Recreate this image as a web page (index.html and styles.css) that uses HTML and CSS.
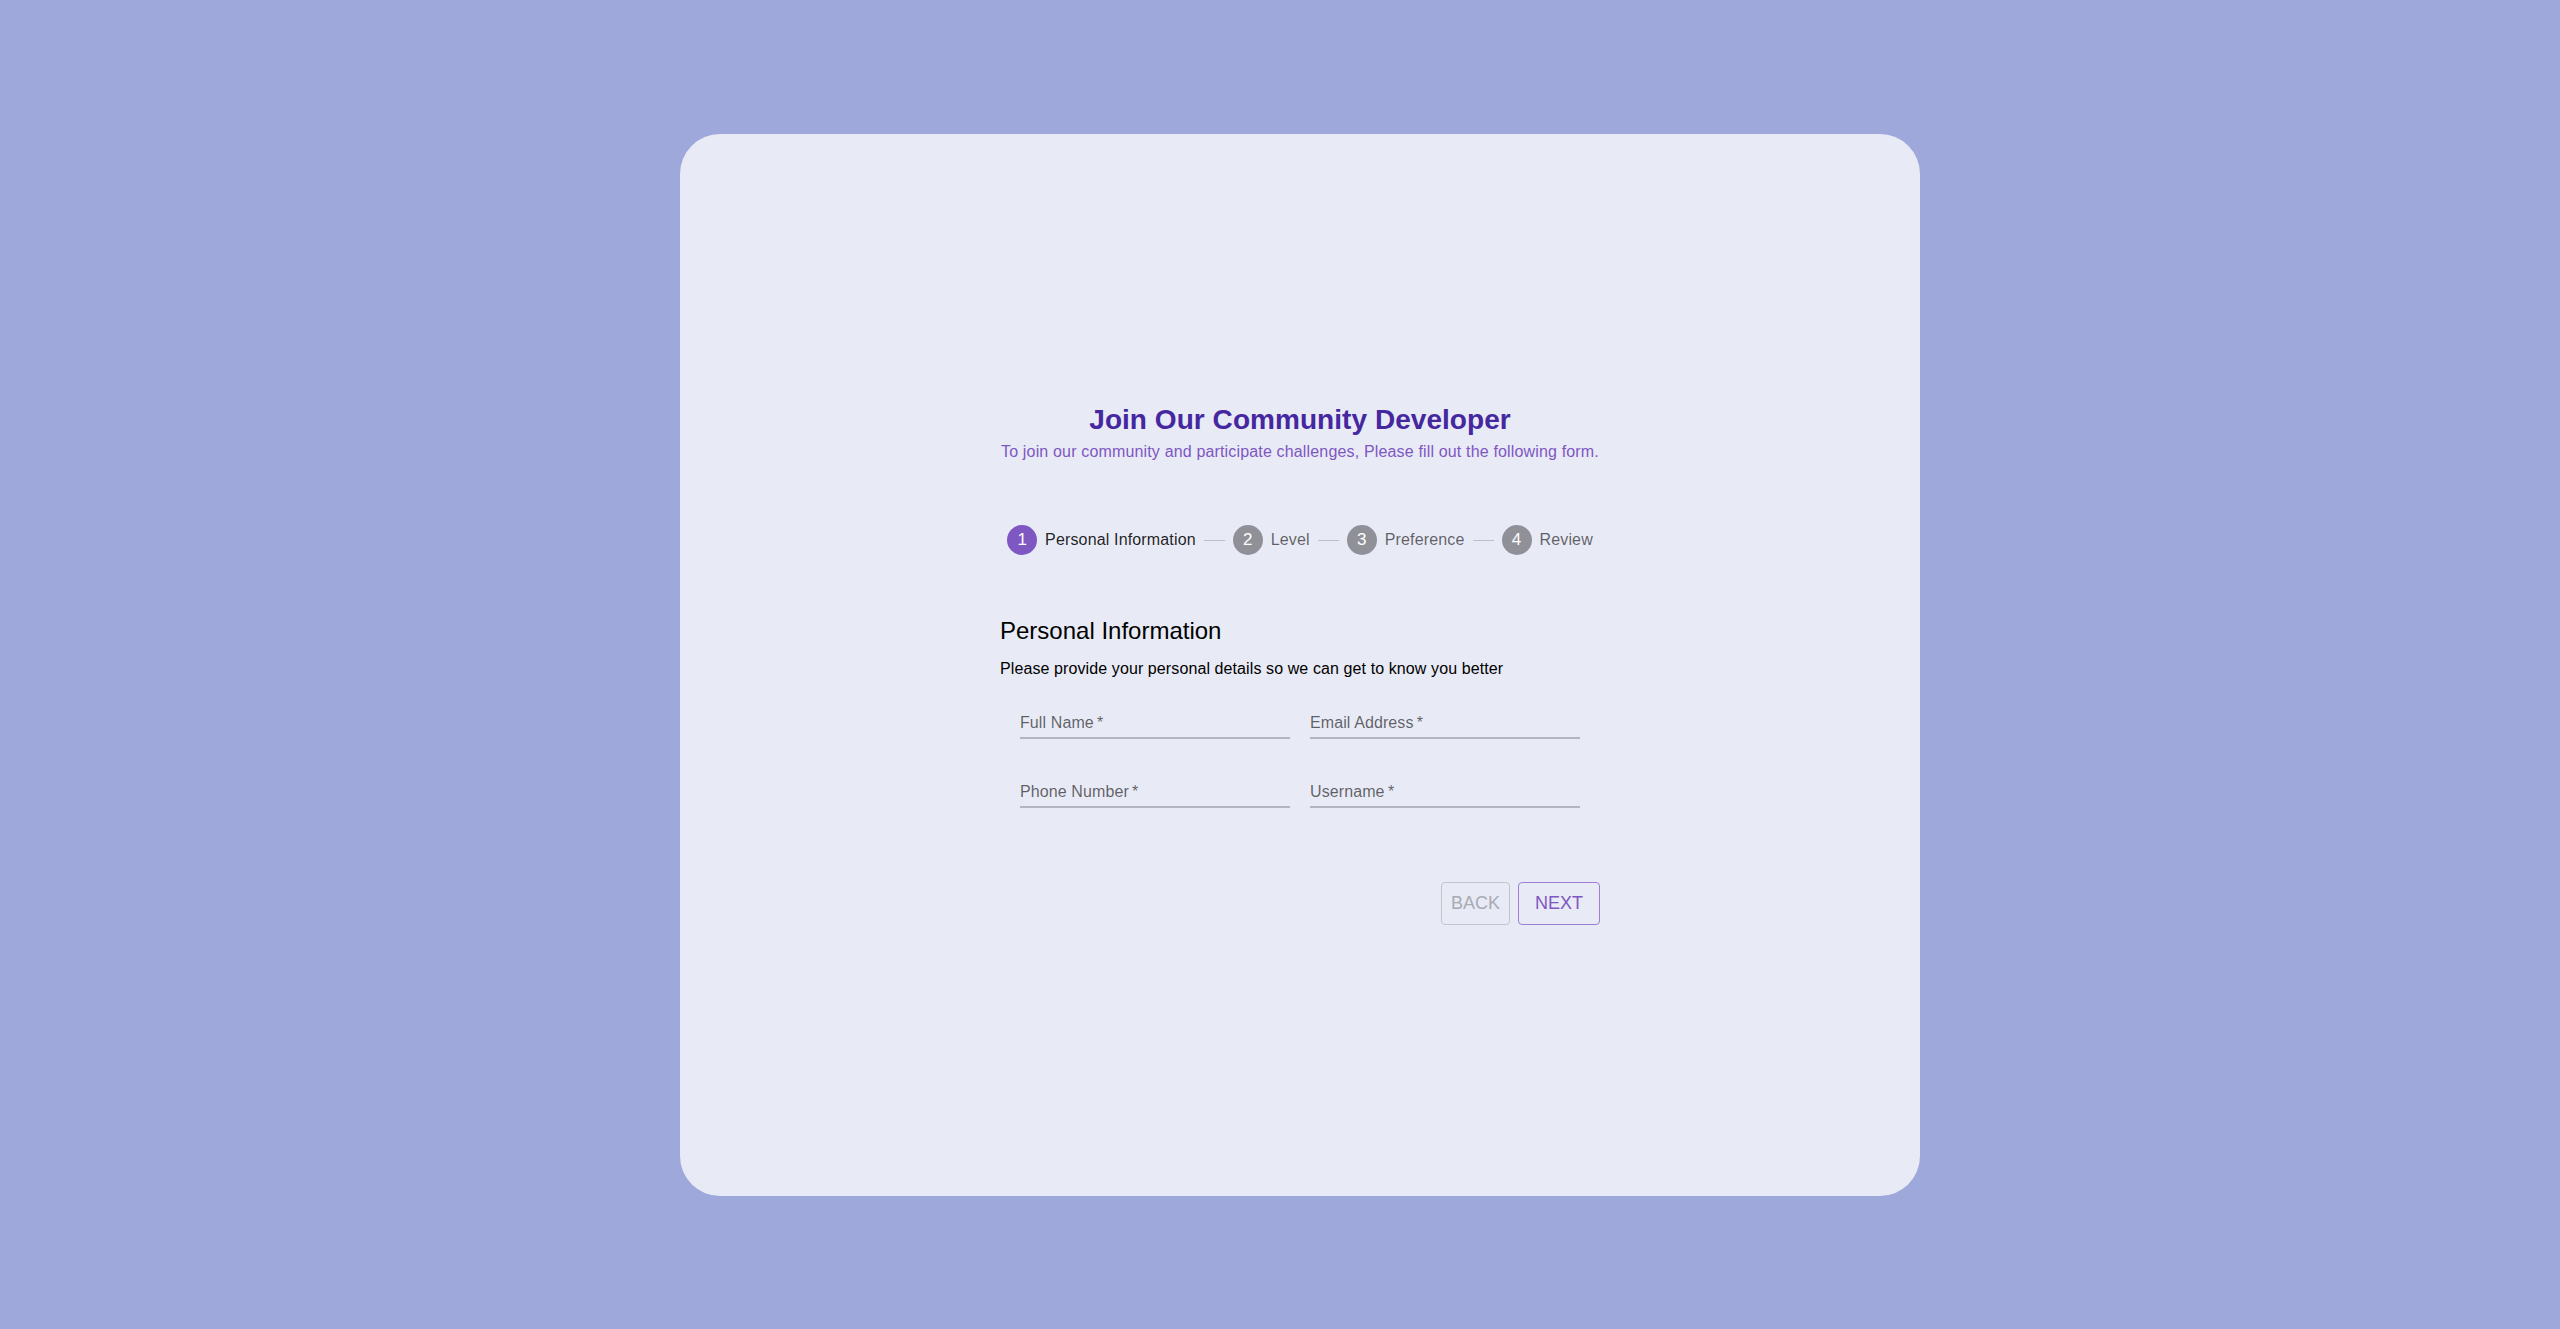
FILE: index.html
```html
<!DOCTYPE html>
<html lang="en">
<head>
<meta charset="utf-8">
<title>Join Our Community Developer</title>
<link rel="stylesheet" href="styles.css">
</head>
<body>
<div class="page">
  <div class="card">
    <div class="content">
      <h1 class="title">Join Our Community Developer</h1>
      <p class="subtitle">To join our community and participate challenges, Please fill out the following form.</p>

      <div class="stepper">
        <div class="step active"><span class="step-icon">1</span><span class="step-label">Personal Information</span></div>
        <span class="connector"></span>
        <div class="step"><span class="step-icon">2</span><span class="step-label">Level</span></div>
        <span class="connector"></span>
        <div class="step"><span class="step-icon">3</span><span class="step-label">Preference</span></div>
        <span class="connector"></span>
        <div class="step"><span class="step-icon">4</span><span class="step-label">Review</span></div>
      </div>

      <div class="form">
        <h2 class="section-title">Personal Information</h2>
        <p class="section-desc">Please provide your personal details so we can get to know you better</p>
        <div class="fields">
          <div class="field"><span class="field-label">Full Name&thinsp;*</span></div>
          <div class="field"><span class="field-label">Email Address&thinsp;*</span></div>
          <div class="field"><span class="field-label">Phone Number&thinsp;*</span></div>
          <div class="field"><span class="field-label">Username&thinsp;*</span></div>
        </div>
        <div class="actions">
          <button class="btn btn-back" disabled>BACK</button>
          <button class="btn btn-next">NEXT</button>
        </div>
      </div>
    </div>
  </div>
</div>
</body>
</html>
```

FILE: styles.css
```css
* { box-sizing: border-box; }

html, body {
  margin: 0;
  padding: 0;
  background: #9fa8da;
  font-family: "Liberation Sans", Arial, Helvetica, sans-serif;
}

.page {
  height: 1329px;
  display: flex;
  align-items: center;
  justify-content: center;
  padding-left: 40px;
}

.card {
  width: 1240px;
  height: 1062px;
  background: #e8eaf6;
  border-radius: 40px;
  display: flex;
  align-items: center;
  justify-content: center;
}

.content {
  width: 600px;
  display: flex;
  flex-direction: column;
}

.title {
  margin: 0;
  font-size: 28px;
  line-height: 32px;
  font-weight: 700;
  color: #4527a0;
  text-align: center;
  letter-spacing: 0.05px;
}

.subtitle {
  margin: 6px 0 0;
  font-size: 16px;
  line-height: 20px;
  color: #7e57c2;
  text-align: center;
  letter-spacing: 0.16px;
}

.stepper {
  margin-top: 63px;
  height: 30px;
  display: flex;
  align-items: center;
  justify-content: center;
}

.step {
  display: flex;
  align-items: center;
  gap: 8px;
}

.step-icon {
  width: 30px;
  height: 30px;
  border-radius: 50%;
  background: rgba(0, 0, 0, 0.38);
  color: #fff;
  font-size: 17px;
  line-height: 30px;
  text-align: center;
}

.step-label {
  font-size: 16px;
  line-height: 20px;
  color: rgba(0, 0, 0, 0.6);
  letter-spacing: 0.15px;
}

.step.active .step-icon { background: #7e57c2; }
.step.active .step-label { color: rgba(0, 0, 0, 0.87); }

.connector {
  width: 21px;
  height: 1px;
  margin: 0 8px;
  background: #bdbdc4;
}

.form {
  display: flex;
  flex-direction: column;
}

.section-title {
  margin: 62px 0 0;
  font-size: 24px;
  line-height: 28px;
  font-weight: 400;
  color: #000;
}

.section-desc {
  margin: 14px 0 0;
  font-size: 16px;
  line-height: 20px;
  color: #000;
  letter-spacing: 0.1px;
}

.fields {
  margin-top: 34px;
  padding: 0 20px;
  display: grid;
  grid-template-columns: 1fr 1fr;
  column-gap: 20px;
  row-gap: 43px;
}

.field {
  padding-bottom: 4px;
  border-bottom: 2px solid #b4b5bf;
}

.field-label {
  display: block;
  font-size: 16px;
  line-height: 20px;
  color: rgba(0, 0, 0, 0.6);
  letter-spacing: 0.1px;
}

.actions {
  margin-top: 74px;
  display: flex;
  justify-content: flex-end;
  gap: 8px;
}

.btn {
  height: 43px;
  font-family: inherit;
  font-size: 18px;
  line-height: 41px;
  background: transparent;
  border-radius: 4px;
  cursor: pointer;
}

.btn-back {
  padding: 0 9px;
  border: 1px solid #c3c4cc;
  color: #a9aab2;
  cursor: default;
}

.btn-next {
  padding: 0 16px;
  border: 1px solid #9d7fd3;
  color: #7e57c2;
}
```
